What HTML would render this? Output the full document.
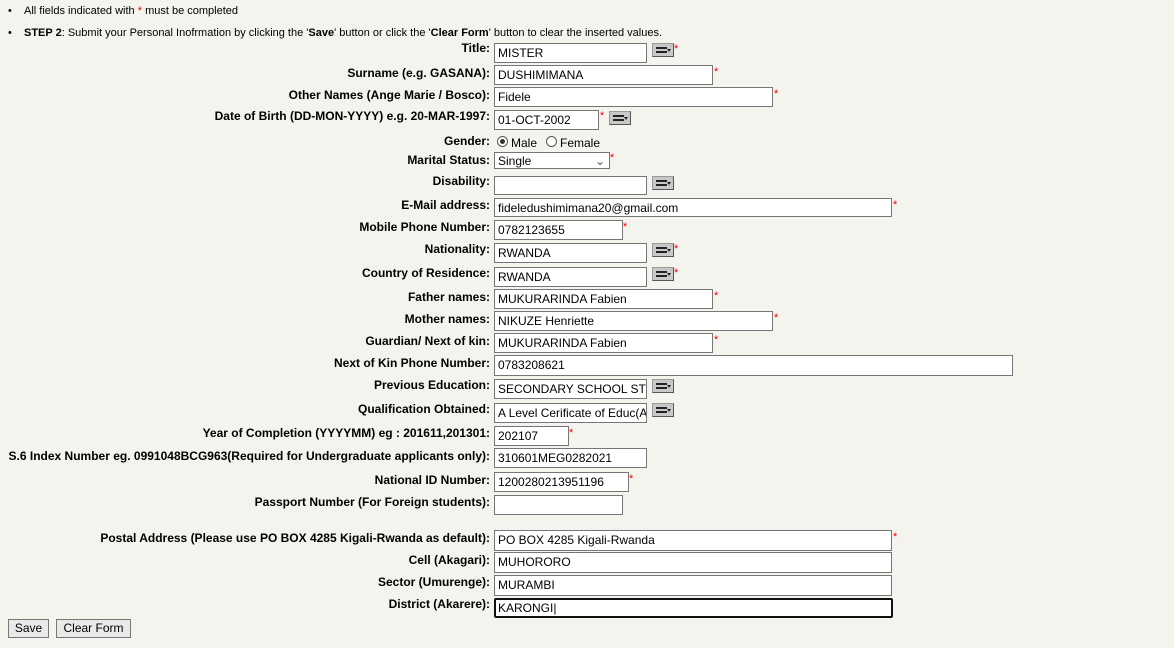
<!DOCTYPE html>
<html><head><style>
body{margin:0;width:1174px;height:648px;background:#f4f3ee;font-family:"Liberation Sans",Arial,sans-serif;font-size:12px;color:#000;position:relative;overflow:hidden}
.a{position:absolute}
.l{position:absolute;right:684px;font-weight:bold;white-space:nowrap}
.i{position:absolute;left:494px;height:19px;border:1px solid #767676;background:#fff;box-sizing:border-box;font-size:12px;padding:1px 3px 0;line-height:16px;white-space:nowrap;overflow:hidden}
.s{position:absolute;color:#e00;font-size:11px}
.ic{position:absolute;width:22px;height:14px;background:#c8c8c8;border:1px solid #999;border-right-color:#555;border-bottom-color:#555;box-sizing:border-box}
.ic:before{content:"";position:absolute;left:3px;top:3px;width:11px;height:6px;border-top:2px solid #222;border-bottom:2px solid #222;box-sizing:border-box}
.ic:after{content:"";position:absolute;right:2px;top:5px;border:2px solid transparent;border-top:3px solid #222}
.b{position:absolute;top:619px;height:19px;border:1px solid #767676;background:#e9e9e9;font-size:12px;text-align:center;line-height:17px;box-sizing:border-box}
</style></head><body>
<div class="a" style="left:8px;top:5px;font-size:11px">•</div><div class="a" style="left:24px;top:5px;font-size:11px">All fields indicated with <span style="color:#e00">*</span> must be completed</div>
<div class="a" style="left:8px;top:27px;font-size:11px">•</div><div class="a" style="left:24px;top:27px;font-size:11px"><b>STEP 2</b>: Submit your Personal Inofrmation by clicking the '<b>Save</b>' button or click the '<b>Clear Form</b>' button to clear the inserted values.</div>

<div class="l" style="top:41px">Title:</div><div class="i" style="top:43px;width:153px;height:20px">MISTER</div><div class="ic" style="left:652px;top:43px"></div><div class="s" style="left:674px;top:43px">*</div>
<div class="l" style="top:66px">Surname (e.g. GASANA):</div><div class="i" style="top:65px;width:219px;height:20px">DUSHIMIMANA</div><div class="s" style="left:714px;top:66px">*</div>
<div class="l" style="top:88px">Other Names (Ange Marie / Bosco):</div><div class="i" style="top:87px;width:279px;height:20px">Fidele</div><div class="s" style="left:774px;top:88px">*</div>
<div class="l" style="top:109px">Date of Birth (DD-MON-YYYY) e.g. 20-MAR-1997:</div><div class="i" style="top:110px;width:105px;height:20px">01-OCT-2002</div><div class="s" style="left:600px;top:110px">*</div><div class="ic" style="left:609px;top:111px"></div>
<div class="l" style="top:134px">Gender:</div>
<div class="a" style="left:497px;top:136px;width:9px;height:9px;border:1px solid #555;border-radius:50%;background:#fff"><div style="position:absolute;left:2px;top:2px;width:5px;height:5px;border-radius:50%;background:#333"></div></div><div class="a" style="left:511px;top:136px">Male</div>
<div class="a" style="left:546px;top:136px;width:9px;height:9px;border:1px solid #555;border-radius:50%;background:#fff"></div><div class="a" style="left:560px;top:136px">Female</div>
<div class="l" style="top:153px">Marital Status:</div><div class="i" style="top:152px;width:116px;height:17px;padding-top:0">Single<span style="position:absolute;right:4px;top:0;color:#555">&#8964;</span></div><div class="s" style="left:610px;top:152px">*</div>
<div class="l" style="top:174px">Disability:</div><div class="i" style="top:176px;width:153px;height:19px"></div><div class="ic" style="left:652px;top:176px"></div>
<div class="l" style="top:198px">E-Mail address:</div><div class="i" style="top:198px;width:398px">fideledushimimana20@gmail.com</div><div class="s" style="left:893px;top:199px">*</div>
<div class="l" style="top:220px">Mobile Phone Number:</div><div class="i" style="top:220px;width:129px;height:20px">0782123655</div><div class="s" style="left:623px;top:221px">*</div>
<div class="l" style="top:242px">Nationality:</div><div class="i" style="top:243px;width:153px;height:20px">RWANDA</div><div class="ic" style="left:652px;top:243px"></div><div class="s" style="left:674px;top:243px">*</div>
<div class="l" style="top:266px">Country of Residence:</div><div class="i" style="top:267px;width:153px;height:20px">RWANDA</div><div class="ic" style="left:652px;top:267px"></div><div class="s" style="left:674px;top:267px">*</div>
<div class="l" style="top:290px">Father names:</div><div class="i" style="top:289px;width:219px;height:20px">MUKURARINDA Fabien</div><div class="s" style="left:714px;top:290px">*</div>
<div class="l" style="top:312px">Mother names:</div><div class="i" style="top:311px;width:279px;height:20px">NIKUZE Henriette</div><div class="s" style="left:774px;top:312px">*</div>
<div class="l" style="top:334px">Guardian/ Next of kin:</div><div class="i" style="top:333px;width:219px;height:20px">MUKURARINDA Fabien</div><div class="s" style="left:714px;top:334px">*</div>
<div class="l" style="top:356px">Next of Kin Phone Number:</div><div class="i" style="top:355px;width:519px;height:21px">0783208621</div>
<div class="l" style="top:378px">Previous Education:</div><div class="i" style="top:379px;width:153px;height:20px">SECONDARY SCHOOL STUDIES</div><div class="ic" style="left:652px;top:379px"></div>
<div class="l" style="top:402px">Qualification Obtained:</div><div class="i" style="top:403px;width:153px;height:20px">A Level Cerificate of Educ(A</div><div class="ic" style="left:652px;top:403px"></div>
<div class="l" style="top:426px">Year of Completion (YYYYMM) eg : 201611,201301:</div><div class="i" style="top:426px;width:75px;height:20px">202107</div><div class="s" style="left:569px;top:427px">*</div>
<div class="l" style="top:449px">S.6 Index Number eg. 0991048BCG963(Required for Undergraduate applicants only):</div><div class="i" style="top:448px;width:153px;height:20px">310601MEG0282021</div>
<div class="l" style="top:473px">National ID Number:</div><div class="i" style="top:472px;width:135px;height:20px">1200280213951196</div><div class="s" style="left:629px;top:473px">*</div>
<div class="l" style="top:495px">Passport Number (For Foreign students):</div><div class="i" style="top:495px;width:129px;height:20px"></div>
<div class="l" style="top:531px">Postal Address (Please use PO BOX 4285 Kigali-Rwanda as default):</div><div class="i" style="top:530px;width:398px;height:21px">PO BOX 4285 Kigali-Rwanda</div><div class="s" style="left:893px;top:531px">*</div>
<div class="l" style="top:553px">Cell (Akagari):</div><div class="i" style="top:552px;width:398px;height:21px">MUHORORO</div>
<div class="l" style="top:575px">Sector (Umurenge):</div><div class="i" style="top:575px;width:398px;height:21px">MURAMBI</div>
<div class="l" style="top:597px">District (Akarere):</div><div class="i" style="top:598px;width:399px;height:20px;border:2px solid #111;border-radius:2px;padding:0 2px">KARONGI|</div>
<div class="b" style="left:8px;width:41px">Save</div>
<div class="b" style="left:56px;width:75px">Clear Form</div>
</body></html>
